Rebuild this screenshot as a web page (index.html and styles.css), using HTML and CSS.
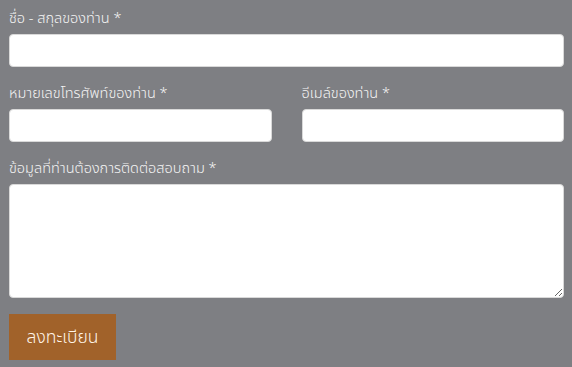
FILE: index.html
```html
<!DOCTYPE html>
<html lang="th">

<head>
  <meta charset="UTF-8">
  <title>ลงทะเบียน</title>
  <link rel="stylesheet" href="styles.css">
</head>

<body>
  <form class="contact-form">
    <div class="field">
      <label class="field-label" for="name">ชื่อ - สกุลของท่าน *</label>
      <input class="field-input" type="text" id="name">
    </div>

    <div class="field-row">
      <div class="field">
        <label class="field-label" for="phone">หมายเลขโทรศัพท์ของท่าน *</label>
        <input class="field-input" type="text" id="phone">
      </div>
      <div class="field">
        <label class="field-label" for="email">อีเมล์ของท่าน *</label>
        <input class="field-input" type="email" id="email">
      </div>
    </div>

    <div class="field">
      <label class="field-label" for="message">ข้อมูลที่ท่านต้องการติดต่อสอบถาม *</label>
      <textarea class="field-input field-textarea" id="message"></textarea>
    </div>

    <button class="submit-button" type="submit">ลงทะเบียน</button>
  </form>
</body>

</html>
```

FILE: styles.css
```css
body {
  margin: 0;
  padding: 0;
  background-color: #7e7f83;
  font-family: "Noto Sans", "Noto Sans Thai", "DejaVu Sans", sans-serif;
}

.contact-form {
  display: flex;
  flex-direction: column;
  gap: 14px;
  padding: 6px 8px 0 9px;
}

.field {
  display: flex;
  flex-direction: column;
}

.field-row {
  display: grid;
  grid-template-columns: 1fr 1fr;
  gap: 30px;
}

.field-label {
  font-size: 14.5px;
  font-weight: 300;
  line-height: 22px;
  color: #f4f4f4;
  margin-bottom: 6px;
}

.field-input {
  height: 33px;
  margin: 0;
  padding: 4px 8px;
  box-sizing: border-box;
  border: 1px solid #d9d9d9;
  border-radius: 4px;
  background-color: #fff;
  font-family: inherit;
  font-size: 14px;
}

.field-textarea {
  height: 114px;
  resize: vertical;
}

.submit-button {
  align-self: flex-start;
  width: 107px;
  height: 46px;
  margin-top: 2px;
  padding: 0;
  border: none;
  border-radius: 0;
  background-color: #a1622a;
  color: #fff4e8;
  font-family: inherit;
  font-size: 17.5px;
  font-weight: 300;
  cursor: pointer;
}
```
